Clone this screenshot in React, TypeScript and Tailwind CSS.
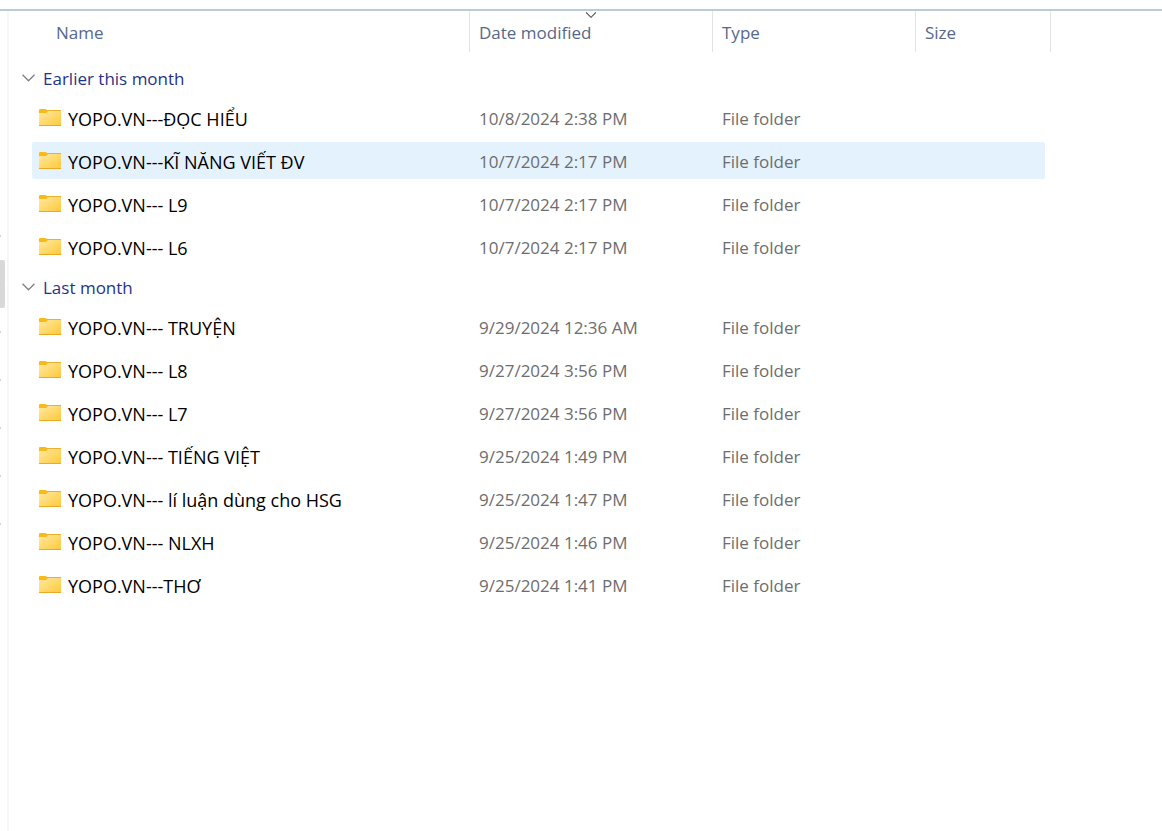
type FileItem = {
  name: string;
  modified: string;
  active?: boolean;
};

type Group = {
  title: string;
  items: FileItem[];
};

const groups: Group[] = [
  {
    title: "Earlier this month",
    items: [
      { name: "YOPO.VN---ĐỌC HIỂU", modified: "10/8/2024 2:38 PM" },
      { name: "YOPO.VN---KĨ NĂNG VIẾT ĐV", modified: "10/7/2024 2:17 PM", active: true },
      { name: "YOPO.VN--- L9", modified: "10/7/2024 2:17 PM" },
      { name: "YOPO.VN--- L6", modified: "10/7/2024 2:17 PM" },
    ],
  },
  {
    title: "Last month",
    items: [
      { name: "YOPO.VN--- TRUYỆN", modified: "9/29/2024 12:36 AM" },
      { name: "YOPO.VN--- L8", modified: "9/27/2024 3:56 PM" },
      { name: "YOPO.VN--- L7", modified: "9/27/2024 3:56 PM" },
      { name: "YOPO.VN--- TIẾNG VIỆT", modified: "9/25/2024 1:49 PM" },
      { name: "YOPO.VN--- lí luận dùng cho HSG", modified: "9/25/2024 1:47 PM" },
      { name: "YOPO.VN--- NLXH", modified: "9/25/2024 1:46 PM" },
      { name: "YOPO.VN---THƠ", modified: "9/25/2024 1:41 PM" },
    ],
  },
];

const navRows = [false, true, false, false, false, false, false];

function FolderIcon() {
  return (
    <svg width="22" height="18" viewBox="0 0 22 18" className="shrink-0" aria-hidden="true">
      <defs>
        <linearGradient id="folder" x1="0" y1="0" x2="1" y2="1">
          <stop offset="0" stopColor="#ffe9a3" />
          <stop offset="1" stopColor="#ffc937" />
        </linearGradient>
      </defs>
      <path d="M0 1.2Q0 0 1.2 0H6.2Q7 0 7.5 .6L8.2 1.4H22V5H0Z" fill="#f9b916" />
      <path d="M8 1H22V2H8Z" fill="#eeb02b" />
      <path d="M0 4H6.6Q7.4 4 8 3.2L8.8 2H22V17H0Z" fill="url(#folder)" />
      <path d="M0 16H22V16.4Q22 17 21.4 17H.6Q0 17 0 16.4Z" fill="#eda921" />
    </svg>
  );
}

function Chevron() {
  return (
    <svg width="13" height="8" viewBox="0 0 13 8" fill="none" stroke="#808080" strokeWidth="1.3" aria-hidden="true">
      <path d="M.5 .8L6.5 6.8L12.5 .8" />
    </svg>
  );
}

function SortMark() {
  return (
    <svg
      width="11"
      height="6"
      viewBox="0 0 11 6"
      fill="none"
      stroke="#555"
      strokeWidth="1.1"
      className="absolute top-px left-1/2 -translate-x-1/2"
      aria-hidden="true"
    >
      <path d="M.5 .3L5.5 5.3L10.5 .3" />
    </svg>
  );
}

function FileRow({ item }: { item: FileItem }) {
  const bg = item.active ? "bg-[#e4f2fe]" : "";

  return (
    <tr className="h-[43px] text-[#6d6d6d]">
      <td className="p-0 pl-[23px]">
        <div className={`flex h-[37px] items-center gap-[7px] rounded-l-xs pl-[7px] text-black ${bg}`}>
          <FolderIcon />
          <span className="pt-[3px] text-lg leading-6 whitespace-nowrap">{item.name}</span>
        </div>
      </td>
      <td className="p-0">
        <div className={`flex h-[37px] items-center pt-[3px] pl-[9px] ${bg}`}>{item.modified}</div>
      </td>
      <td className="p-0">
        <div className={`flex h-[37px] items-center pt-[3px] pl-[9px] ${bg}`}>File folder</div>
      </td>
      <td className="p-0 pr-[6px]">
        <div className={`h-[37px] rounded-r-xs ${bg}`} />
      </td>
      <td className="p-0" />
    </tr>
  );
}

function ColumnHead({ label, sorted, first }: { label: string; sorted?: boolean; first?: boolean }) {
  return (
    <th className="relative border-r border-[#e3e3e3] p-0 text-left font-normal">
      {sorted && <SortMark />}
      <button type="button" className={`h-[41px] w-full pt-0.5 text-left ${first ? "pl-[47px]" : "pl-[9px]"}`}>
        {label}
      </button>
    </th>
  );
}

export default function App() {
  return (
    <div className="flex min-h-screen flex-col bg-white pt-[9px] font-['Open_Sans','Noto_Sans',sans-serif] text-[17px] leading-6">
      <div className="flex grow border-t-2 border-[#bccbda]">
        <aside className="w-[9px] shrink-0 border-r-2 border-[#f6f6f6] pt-[201px]">
          {navRows.map((active, i) => (
            <div
              key={i}
              className={`flex h-12 items-center ${active ? "w-[5px] rounded-r-xs bg-[#d9d9d9]" : ""}`}
            >
              <span className="h-0.5 w-px bg-[#d4d4d4]" />
            </div>
          ))}
        </aside>

        <main className="grow">
          <table className="w-full table-fixed border-separate border-spacing-0">
            <colgroup>
              <col className="w-[461px]" />
              <col className="w-[243px]" />
              <col className="w-[203px]" />
              <col className="w-[135px]" />
              <col />
            </colgroup>
            <thead className="text-[#56688a]">
              <tr>
                <ColumnHead label="Name" first />
                <ColumnHead label="Date modified" sorted />
                <ColumnHead label="Type" />
                <ColumnHead label="Size" />
                <th className="p-0" />
              </tr>
            </thead>
            {groups.map((group, i) => (
              <tbody key={group.title}>
                <tr>
                  <th colSpan={5} className={`p-0 text-left font-normal ${i === 0 ? "pt-[7px]" : ""}`}>
                    <button type="button" className="flex h-[37px] items-center gap-2 pl-[13px] text-[#1f3389]">
                      <Chevron />
                      <span className="pt-0.5">{group.title}</span>
                    </button>
                  </th>
                </tr>
                {group.items.map((item) => (
                  <FileRow key={item.name} item={item} />
                ))}
              </tbody>
            ))}
          </table>
        </main>
      </div>
    </div>
  );
}
